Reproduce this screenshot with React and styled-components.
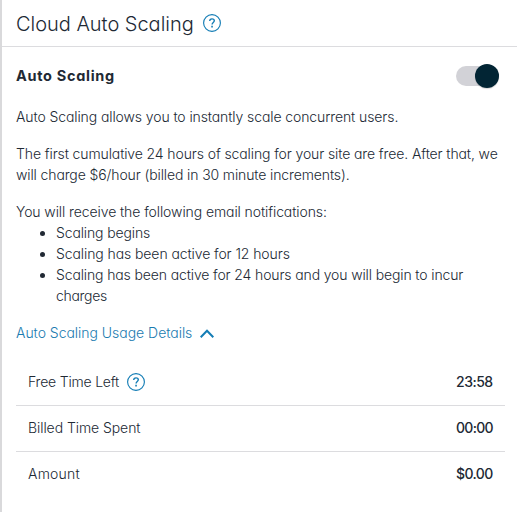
import styled, { createGlobalStyle } from "styled-components";

const GlobalStyle = createGlobalStyle`
  * {
    box-sizing: border-box;
  }
  body {
    margin: 0;
    background: #fff;
    color: #212934;
    font-family: Inter, Lato, sans-serif;
    font-feature-settings: "cv11";
    font-size: 14px;
    font-weight: 350;
    line-height: 21px;
  }
`

const Panel = styled.section`
  height: 512px;
  border-left: 2px solid #d9d9db;
  overflow: hidden;
`

const Header = styled.header`
  display: flex;
  align-items: center;
  gap: 10px;
  height: 47px;
  padding: 0 14px;
  border-bottom: 1px solid #dcdcdf;
`

const Title = styled.h1`
  width: 177px;
  margin: 0;
  padding-top: 2px;
  font-size: 20px;
  font-weight: 350;
  line-height: 44px;
  letter-spacing: ${(props) => props.$spacing || 0}px;
  white-space: nowrap;
`

const Content = styled.div`
  padding: 17px 12px 0 14px;
`

const ToggleRow = styled.div`
  display: flex;
  align-items: center;
  justify-content: space-between;
  height: 24px;
  padding-right: 6px;
  margin-bottom: 18px;
`

const Subtitle = styled.h2`
  margin: 0;
  padding-bottom: 2px;
  font-size: 14.5px;
  font-weight: 650;
  letter-spacing: ${(props) => props.$spacing || 0}px;
`

const Switch = styled.button`
  display: flex;
  align-items: center;
  justify-content: flex-end;
  width: 43px;
  height: 20px;
  padding: 0;
  border: 0;
  border-radius: 10px;
  background: #d2d2d7;
`

const Knob = styled.span`
  flex: none;
  width: 24px;
  height: 24px;
  border-radius: 50%;
  background: #022534;
  box-shadow: 0 1px 1px rgba(0, 0, 0, 0.16);
`

const Paragraph = styled.p`
  margin: 0 0 ${(props) => props.$bottom ?? 16}px;
`

const Line = styled.span`
  display: block;
  letter-spacing: ${(props) => props.$spacing || 0}px;
  white-space: nowrap;
`

const List = styled.ul`
  margin: 0 0 16px;
  padding-left: 40px;
`

const DetailsLink = styled.button`
  display: flex;
  align-items: center;
  gap: 8px;
  height: 21px;
  margin: 0 0 17px;
  padding: 0;
  border: 0;
  background: none;
  color: #1a7bb0;
  font: inherit;
  font-feature-settings: inherit;
`

const LinkLabel = styled(Line)`
  width: 176px;
  text-align: left;
`

const Chevron = styled.svg`
  margin-top: 2px;
`

const UsageRow = styled.div`
  display: flex;
  align-items: center;
  justify-content: space-between;
  height: 46px;
  padding: 0 12px 1px;
  border-bottom: 1px solid ${(props) => (props.$last ? "transparent" : "#dcdcdf")};
`

const UsageLabel = styled.div`
  display: flex;
  align-items: center;
  gap: 8px;
`

const UsageText = styled(Line)`
  padding-bottom: 2px;
`

const Value = styled(UsageText)`
  font-weight: 550;
  width: 37px;
`

const HelpSvg = styled.svg`
  flex: none;
  display: block;
`

const HelpIcon = () => (
  <HelpSvg width="18" height="18" viewBox="0 0 18 18" fill="none" stroke="#147db5">
    <circle cx="9" cy="9" r="8.4" strokeWidth="1.15" />
    <path d="M6.7 7.1C6.7 5.7 7.6 4.9 9 4.9s2.3.8 2.3 1.9c0 1.6-2.2 1.7-2.2 3.6" strokeWidth="1.4" />
    <path d="M8.25 12.6h1.6" strokeWidth="1.6" />
  </HelpSvg>
)

const usage = [
  { label: "Free Time Left", value: "23:58", spacing: -0.2, valueSpacing: -0.5, help: true },
  { label: "Billed Time Spent", value: "00:00", spacing: -0.07, valueSpacing: -0.7 },
  { label: "Amount", value: "$0.00", spacing: 0.2, valueSpacing: -0.6 },
]

export default function App() {
  return (
    <>
      <GlobalStyle />
      <Panel>
        <Header>
          <Title $spacing={-0.02}>Cloud Auto Scaling</Title>
          <HelpIcon />
        </Header>
        <Content>
          <ToggleRow>
            <Subtitle $spacing={0.7}>Auto Scaling</Subtitle>
            <Switch role="switch" aria-checked="true" aria-label="Auto Scaling">
              <Knob />
            </Switch>
          </ToggleRow>
          <Paragraph>
            <Line $spacing={-0.1}>Auto Scaling allows you to instantly scale concurrent users.</Line>
          </Paragraph>
          <Paragraph>
            <Line $spacing={-0.11}>The first cumulative 24 hours of scaling for your site are free. After that, we</Line>
            <Line $spacing={-0.12}>will charge $6/hour (billed in 30 minute increments).</Line>
          </Paragraph>
          <Paragraph $bottom={0}>
            <Line $spacing={-0.09}>You will receive the following email notifications:</Line>
          </Paragraph>
          <List>
            <li><Line $spacing={-0.13}>Scaling begins</Line></li>
            <li><Line $spacing={-0.09}>Scaling has been active for 12 hours</Line></li>
            <li>
              <Line $spacing={-0.13}>Scaling has been active for 24 hours and you will begin to incur</Line>
              <Line $spacing={-0.3}>charges</Line>
            </li>
          </List>
          <DetailsLink aria-expanded="true">
            <LinkLabel $spacing={-0.03}>Auto Scaling Usage Details</LinkLabel>
            <Chevron width="14" height="9" viewBox="0 0 14 9" fill="none" stroke="#147db5" strokeWidth="2">
              <path d="M.7 8.2 7 1.7l6.3 6.5" />
            </Chevron>
          </DetailsLink>
          {usage.map((row, i) => (
            <UsageRow key={row.label} $last={i === usage.length - 1}>
              <UsageLabel>
                <UsageText $spacing={row.spacing}>{row.label}</UsageText>
                {row.help && <HelpIcon />}
              </UsageLabel>
              <Value $spacing={row.valueSpacing}>{row.value}</Value>
            </UsageRow>
          ))}
        </Content>
      </Panel>
    </>
  )
}
